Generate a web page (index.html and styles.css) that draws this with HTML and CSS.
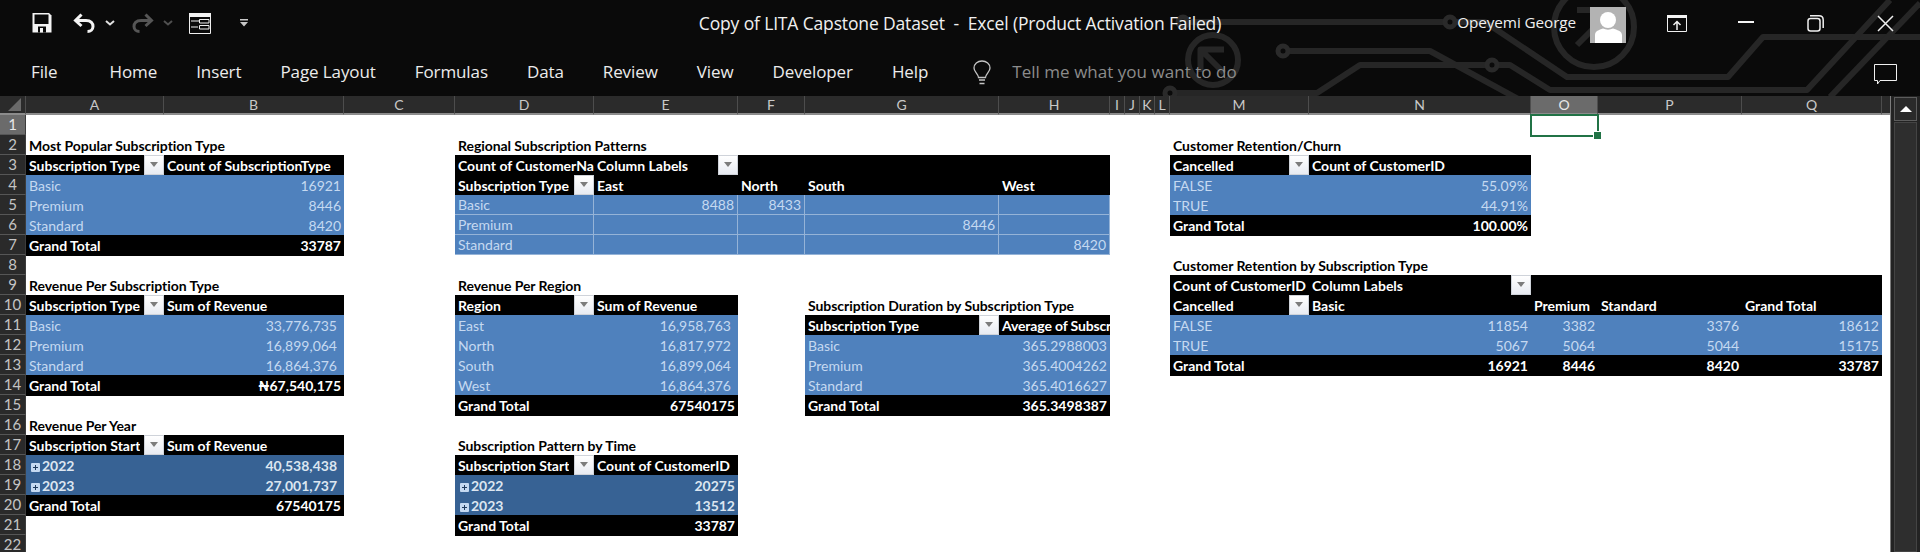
FILE: index.html
```html
<!DOCTYPE html>
<html lang="en">
<head>
<meta charset="utf-8">
<title>Copy of LITA Capstone Dataset - Excel</title>
<link rel="stylesheet" href="styles.css">
</head>
<body>
<header class="ribbon">
  <svg class="circuit" viewBox="0 0 1920 96" width="1920" height="96" aria-hidden="true">
    <g class="trace">
      <path d="M1183 22H1485L1567 77H1728L1763 37H1920"/>
      <path d="M1283 51H1430L1520 100"/>
      <path d="M1170 93H1317L1360 65H1510L1550 90H1807L1890 0"/>
      <path d="M1830 97L1920 3"/>
      <circle cx="1213" cy="60" r="25"/>
      <path d="M1224 49.500H1200.500V72M1202 51L1224 73"/>
      <circle cx="1594" cy="27" r="40"/>
      <path d="M1577 10H1612V40M1610 12L1577 45"/>
    </g>
    <g class="node">
      <circle cx="1183" cy="22" r="5"/>
      <circle cx="1450" cy="22" r="5"/>
      <circle cx="1283" cy="51" r="5"/>
      <circle cx="1492" cy="65" r="5"/>
      <circle cx="1170" cy="93" r="5"/>
    </g>
  </svg>

  <div class="titlebar">
    <div class="qat">
      <svg class="ic-save" width="20" height="20" viewBox="0 0 20 20"><path class="f-w" d="M1 0H17L19.500 2.500V19.500H.500V.500Z"/><path class="f-k" d="M2.500 1.500H16.500V11H2.500Z"/><path class="f-k" d="M6 13.500H14V19.500H6Z"/><path class="f-w" d="M8 15H11V19.500H8Z"/></svg>
      <svg class="ic-undo" width="22" height="20" viewBox="0 0 22 20"><path class="s-w" d="M8.500 1.500L2.500 7.500L8.500 13M2.500 7.500H13C18 7.500 20 10.500 20 13.500C20 16.500 17.500 18.500 14.500 18.500"/></svg>
      <svg class="ic-chev" width="10" height="6" viewBox="0 0 10 6"><path class="s-c" d="M1 1L5 4.500L9 1"/></svg>
      <svg class="ic-redo" width="22" height="20" viewBox="0 0 22 20"><path class="s-g" d="M13.500 1.500L19.500 7.500L13.500 13M19.500 7.500H9C4 7.500 2 10.500 2 13.500C2 16.500 4.500 18.500 7.500 18.500"/></svg>
      <svg class="ic-chev2" width="10" height="6" viewBox="0 0 10 6"><path class="s-cg" d="M1 1L5 4.500L9 1"/></svg>
      <svg class="ic-form" width="22" height="21" viewBox="0 0 22 21"><path class="s-t" d="M.500 .500H21.500V20.500H.500Z"/><path class="f-w" d="M0 0H22V4H0Z"/><path class="s-t" d="M2 8H10L11 6.500M10.500 6.500H20V10H10.500ZM2 14H9M10.500 12.500H20V16H10.500Z"/></svg>
      <svg class="ic-more" width="10" height="8" viewBox="0 0 10 8"><path class="f-l" d="M1 0H9V1.500H1ZM1 3H9L5 7.500Z"/></svg>
    </div>
    <div class="doc-title">Copy of LITA Capstone Dataset&nbsp; -&nbsp; Excel (Product Activation Failed)</div>
    <div class="account">
      <span class="user">Opeyemi George</span>
      <svg class="avatar" width="36" height="36" viewBox="0 0 36 36"><path class="f-a" d="M0 0H36V36H0Z"/><circle class="f-wh" cx="18" cy="13" r="8"/><path class="f-wh" d="M5 36V28C5 24 9 23 13 21.500C16 23 20 23 23 21.500C27 23 32 24 32 28V36Z"/></svg>
      <svg class="ic-display" width="20" height="17" viewBox="0 0 20 17"><path class="s-t" d="M.500 .500H19.500V16.500H.500Z"/><path class="f-w" d="M0 0H20V3H0Z"/><path class="s-t2" d="M10 15V7M6.500 10L10 6.500L13.500 10"/></svg>
      <svg class="ic-min" width="16" height="2" viewBox="0 0 16 2"><path class="f-w" d="M0 0H16V2H0Z"/></svg>
      <svg class="ic-restore" width="17" height="17" viewBox="0 0 17 17"><path class="s-t2" d="M3 .800H12Q16.200 .800 16.200 5V13M1 6Q1 3.500 3.500 3.500H10.500Q13 3.500 13 6V13.500Q13 16 10.500 16H3.500Q1 16 1 13.500Z"/></svg>
      <svg class="ic-close" width="17" height="17" viewBox="0 0 17 17"><path class="s-t2" d="M1 1L16 16M16 1L1 16"/></svg>
    </div>
  </div>

  <nav class="tabs">
    <span class="tab tab-file">File</span>
    <span class="tab">Home</span>
    <span class="tab">Insert</span>
    <span class="tab">Page Layout</span>
    <span class="tab">Formulas</span>
    <span class="tab">Data</span>
    <span class="tab">Review</span>
    <span class="tab">View</span>
    <span class="tab">Developer</span>
    <span class="tab">Help</span>
    <svg class="ic-bulb" width="18" height="25" viewBox="0 0 18 25"><path class="s-b" d="M5.500 17.500C5 13.500 1 12 1 8C1 4 4.500 1 9 1C13.500 1 17 4 17 8C17 12 13 13.500 12.500 17.500ZM6 20H12M6.500 23.500H11.500"/></svg>
    <span class="tell">Tell me what you want to do</span>
    <svg class="ic-comment" width="23" height="21" viewBox="0 0 23 21"><path class="s-t" d="M.500 .500H22.500V16.500H6L3.500 20V16.500H.500Z"/></svg>
  </nav>
</header>

<main class="workbook">
  <table class="sheet">
    <colgroup><col><col><col><col><col><col><col><col><col><col><col><col><col><col><col><col><col><col><col></colgroup>
    <thead>
      <tr class="colhead">
        <th class="corner"><svg width="13" height="13" viewBox="0 0 13 13"><path class="f-corner" d="M13 0V13H0Z"/></svg></th>
        <th>A</th><th>B</th><th>C</th><th>D</th><th>E</th><th>F</th><th>G</th><th>H</th><th>I</th><th>J</th><th>K</th><th>L</th><th>M</th><th>N</th><th class="on">O</th><th>P</th><th>Q</th><th class="end"></th>
      </tr>
    </thead>
    <tbody>
      <tr><th class="rh on">1</th><td colspan="14"></td><td class="cur"><span class="selbox"></span></td><td colspan="3"></td></tr>

      <tr><th class="rh">2</th><td class="title" colspan="3">Most Popular Subscription Type</td><td class="title" colspan="9">Regional Subscription Patterns</td><td class="title" colspan="6">Customer Retention/Churn</td></tr>

      <tr><th class="rh">3</th><td class="hd"><div class="hf"><span>Subscription Type</span><i class="filter"></i></div></td><td class="hd">Count of SubscriptionType</td><td></td><td class="hd">Count of CustomerNa</td><td class="hd"><div class="hf"><span>Column Labels</span><i class="filter"></i></div></td><td class="hd"></td><td class="hd"></td><td class="hd"></td><td colspan="4"></td><td class="hd"><div class="hf"><span>Cancelled</span><i class="filter"></i></div></td><td class="hd">Count of CustomerID</td><td colspan="4"></td></tr>

      <tr><th class="rh">4</th><td class="d">Basic</td><td class="d num">16921</td><td></td><td class="hd"><div class="hf"><span>Subscription Type</span><i class="filter"></i></div></td><td class="hd">East</td><td class="hd">North</td><td class="hd">South</td><td class="hd">West</td><td colspan="4"></td><td class="d">FALSE</td><td class="d num">55.09%</td><td colspan="4"></td></tr>

      <tr><th class="rh">5</th><td class="d">Premium</td><td class="d num">8446</td><td></td><td class="d g">Basic</td><td class="d g num">8488</td><td class="d g num">8433</td><td class="d g"></td><td class="d g"></td><td colspan="4"></td><td class="d">TRUE</td><td class="d num">44.91%</td><td colspan="4"></td></tr>

      <tr><th class="rh">6</th><td class="d">Standard</td><td class="d num">8420</td><td></td><td class="d g">Premium</td><td class="d g"></td><td class="d g"></td><td class="d g num">8446</td><td class="d g"></td><td colspan="4"></td><td class="gt">Grand Total</td><td class="gt num">100.00%</td><td colspan="4"></td></tr>

      <tr><th class="rh">7</th><td class="gt">Grand Total</td><td class="gt num">33787</td><td></td><td class="d g">Standard</td><td class="d g"></td><td class="d g"></td><td class="d g"></td><td class="d g num">8420</td><td colspan="10"></td></tr>

      <tr><th class="rh">8</th><td colspan="12"></td><td class="title" colspan="6">Customer Retention by Subscription Type</td></tr>

      <tr><th class="rh">9</th><td class="title" colspan="3">Revenue Per Subscription Type</td><td class="title" colspan="9">Revenue Per Region</td><td class="hd">Count of CustomerID</td><td class="hd"><div class="hf"><span>Column Labels</span><i class="filter"></i></div></td><td class="hd"></td><td class="hd"></td><td class="hd"></td><td></td></tr>

      <tr><th class="rh">10</th><td class="hd"><div class="hf"><span>Subscription Type</span><i class="filter"></i></div></td><td class="hd">Sum of Revenue</td><td></td><td class="hd"><div class="hf"><span>Region</span><i class="filter"></i></div></td><td class="hd">Sum of Revenue</td><td></td><td class="title" colspan="6">Subscription Duration by Subscription Type</td><td class="hd"><div class="hf"><span>Cancelled</span><i class="filter"></i></div></td><td class="hd">Basic</td><td class="hd">Premium</td><td class="hd">Standard</td><td class="hd">Grand Total</td><td></td></tr>

      <tr><th class="rh">11</th><td class="d">Basic</td><td class="d num acct">33,776,735</td><td></td><td class="d">East</td><td class="d num acct">16,958,763</td><td></td><td class="hd"><div class="hf"><span>Subscription Type</span><i class="filter"></i></div></td><td class="hd tight">Average of Subscr</td><td colspan="4"></td><td class="d">FALSE</td><td class="d num">11854</td><td class="d num">3382</td><td class="d num">3376</td><td class="d num">18612</td><td></td></tr>

      <tr><th class="rh">12</th><td class="d">Premium</td><td class="d num acct">16,899,064</td><td></td><td class="d">North</td><td class="d num acct">16,817,972</td><td></td><td class="d">Basic</td><td class="d num">365.2988003</td><td colspan="4"></td><td class="d">TRUE</td><td class="d num">5067</td><td class="d num">5064</td><td class="d num">5044</td><td class="d num">15175</td><td></td></tr>

      <tr><th class="rh">13</th><td class="d">Standard</td><td class="d num acct">16,864,376</td><td></td><td class="d">South</td><td class="d num acct">16,899,064</td><td></td><td class="d">Premium</td><td class="d num">365.4004262</td><td colspan="4"></td><td class="gt">Grand Total</td><td class="gt num">16921</td><td class="gt num">8446</td><td class="gt num">8420</td><td class="gt num">33787</td><td></td></tr>

      <tr><th class="rh">14</th><td class="gt">Grand Total</td><td class="gt num">₦67,540,175</td><td></td><td class="d">West</td><td class="d num acct">16,864,376</td><td></td><td class="d">Standard</td><td class="d num">365.4016627</td><td colspan="10"></td></tr>

      <tr><th class="rh">15</th><td colspan="3"></td><td class="gt">Grand Total</td><td class="gt num">67540175</td><td></td><td class="gt">Grand Total</td><td class="gt num">365.3498387</td><td colspan="10"></td></tr>

      <tr><th class="rh">16</th><td class="title" colspan="3">Revenue Per Year</td><td colspan="15"></td></tr>

      <tr><th class="rh">17</th><td class="hd"><div class="hf"><span>Subscription Start</span><i class="filter"></i></div></td><td class="hd">Sum of Revenue</td><td></td><td class="title" colspan="15">Subscription Pattern by Time</td></tr>

      <tr><th class="rh">18</th><td class="yr"><i class="plus"></i>2022</td><td class="yr num acct">40,538,438</td><td></td><td class="hd"><div class="hf"><span>Subscription Start</span><i class="filter"></i></div></td><td class="hd">Count of CustomerID</td><td colspan="13"></td></tr>

      <tr><th class="rh">19</th><td class="yr"><i class="plus"></i>2023</td><td class="yr num acct">27,001,737</td><td></td><td class="yr"><i class="plus"></i>2022</td><td class="yr num">20275</td><td colspan="13"></td></tr>

      <tr><th class="rh">20</th><td class="gt">Grand Total</td><td class="gt num">67540175</td><td></td><td class="yr"><i class="plus"></i>2023</td><td class="yr num">13512</td><td colspan="13"></td></tr>

      <tr><th class="rh">21</th><td colspan="3"></td><td class="gt">Grand Total</td><td class="gt num">33787</td><td colspan="13"></td></tr>

      <tr><th class="rh">22</th><td colspan="18"></td></tr>
    </tbody>
  </table>
  <aside class="vscroll">
    <div class="sb-up"><i></i></div>
    <div class="sb-thumb"></div>
  </aside>
</main>
</body>
</html>
```

FILE: styles.css
```css
* { box-sizing: border-box; }
html, body { margin: 0; height: 552px; overflow: hidden; }
body { width: 1920px; display: flex; flex-direction: column; background: #fff; font-family: "Lato", "Liberation Sans", sans-serif; }

/* ribbon */
.ribbon { position: relative; height: 96px; flex: none; background: #0a0a0a; color: #fff; font-family: "Open Sans", "Noto Sans", sans-serif; overflow: hidden; }
.circuit { position: absolute; left: 0; top: 0; }
.trace { fill: none; stroke: #262626; stroke-width: 6; stroke-linejoin: round; }
.node { fill: #0a0a0a; stroke: #2a2a2a; stroke-width: 5; }

.titlebar { position: relative; height: 48px; display: grid; grid-template-columns: 1fr auto 1fr; align-items: center; }
.qat { display: flex; align-items: center; padding: 0 0 2px 32px; }
.qat svg { display: block; flex: none; }
.ic-save { margin-right: 21px; }
.ic-undo { margin-right: 10px; }
.ic-chev { margin-right: 17px; }
.ic-redo { margin-right: 9px; }
.ic-chev2 { margin-right: 16px; }
.ic-form { margin-right: 28px; }
.doc-title { font-size: 17.500px; color: #f0f0f0; padding-bottom: 3px; white-space: nowrap; letter-spacing: -.15px; }
.account { display: flex; align-items: center; justify-content: flex-end; }
.account svg { display: block; flex: none; }
.user { font-size: 15.300px; color: #f0f0f0; margin-right: 14px; padding-bottom: 4px; letter-spacing: -.1px; }
.avatar { margin: 0 41px 0 0; position: relative; top: 1px; }
.ic-display { margin-right: 51px; position: relative; top: -1px; }
.ic-min { margin-right: 53px; position: relative; top: -2px; }
.ic-restore { margin-right: 53px; position: relative; top: -1px; }
.ic-close { margin-right: 26px; position: relative; top: -1px; }

.tabs { position: relative; height: 48px; display: flex; align-items: center; padding: 0 0 0 31px; font-size: 17px; color: #ececec; }
.tab { margin-right: 39px; white-space: nowrap; letter-spacing: -.1px; padding-bottom: 1px; }
.tab-file { margin-right: 52px; }
.ic-bulb { flex: none; margin: 0 21px 0 6px; }
.tell { color: #8c8c8c; white-space: nowrap; letter-spacing: .03px; padding-bottom: 1px; }
.ic-comment { position: absolute; left: 1874px; top: 16px; }

/* icon paints */
.f-w { fill: #f4f4f4; }
.f-k { fill: #0a0a0a; }
.f-l { fill: #c8c8c8; }
.f-a { fill: #b3b3b3; }
.f-wh { fill: #fff; }
.f-corner { fill: #6a6a6a; }
.s-w, .s-g, .s-c, .s-cg, .s-t, .s-t2, .s-b { fill: none; }
.s-w { stroke: #f4f4f4; stroke-width: 3; }
.s-g { stroke: #565656; stroke-width: 3; }
.s-c { stroke: #e0e0e0; stroke-width: 2; }
.s-cg { stroke: #505050; stroke-width: 2; }
.s-t { stroke: #f0f0f0; stroke-width: 1; }
.s-t2 { stroke: #f0f0f0; stroke-width: 1.500; }
.s-b { stroke: #c4c4c4; stroke-width: 1.300; }

/* sheet */
.workbook { flex: 1; min-height: 0; display: flex; overflow: hidden; }
.sheet { width: 1890px; flex: none; table-layout: fixed; border-collapse: separate; border-spacing: 0; font-size: 14px; align-self: flex-start; }
col:nth-child(1) { width: 26px; }
col:nth-child(2) { width: 138px; }
col:nth-child(3) { width: 180px; }
col:nth-child(4) { width: 111px; }
col:nth-child(5) { width: 139px; }
col:nth-child(6) { width: 144px; }
col:nth-child(7) { width: 67px; }
col:nth-child(8) { width: 194px; }
col:nth-child(9) { width: 111px; }
col:nth-child(10), col:nth-child(11), col:nth-child(12), col:nth-child(13) { width: 15px; }
col:nth-child(14) { width: 139px; }
col:nth-child(15) { width: 222px; }
col:nth-child(16) { width: 67px; }
col:nth-child(17) { width: 144px; }
col:nth-child(18) { width: 140px; }
col:nth-child(19) { width: 8px; }

.colhead th { height: 19px; padding: 0; background: #2b2b2b; color: #c8c8c8; font-weight: 400; line-height: 17px; text-align: center; border-right: 1px solid #4d4d4d; border-bottom: 2px solid #8c8c8c; }
.colhead th.on { background: #6b6b6b; color: #e8e8e8; }
.colhead th.end { border-right: 0; }
.colhead .corner { text-align: right; padding-right: 4px; vertical-align: bottom; }
.corner svg { display: block; margin: 0 0 2px auto; }

tbody tr { height: 20px; }
td, .rh { height: 20px; padding: 0; line-height: 19px; white-space: nowrap; overflow: hidden; }
td { padding: 0 3px; color: #000; }
.rh { background: #2a2a2a; color: #c4c4c4; font-weight: 400; text-align: center; font-size: 15px; border-bottom: 1px solid #565656; border-right: 1px solid #3c3c3c; }
.rh.on { background: #6b6b6b; color: #e8e8e8; }

.title { font-weight: 700; overflow: visible; letter-spacing: -.06px; }
.hd { background: #000; color: #fff; font-weight: 700; padding: 0 3px; }
td:has(> .hf) { padding: 0; }
.hf { display: flex; align-items: center; justify-content: space-between; height: 20px; }
.hf span { padding-left: 3px; overflow: hidden; }
.filter { flex: none; width: 20px; height: 20px; display: flex; align-items: center; justify-content: center; background: linear-gradient(#fff, #e8ebf2); border: 1px solid #cfd3da; }
.filter::after { content: ""; border: 4px solid transparent; border-top: 5px solid #7c7c7c; border-bottom: 0; margin-top: -2px; }
.tight { letter-spacing: -.15px; }

.d { background: #4f81bd; color: #c5d9f1; }
.g { border-right: 1px solid #95b3d7; border-bottom: 1px solid #95b3d7; }
.yr { background: #376294; color: #dce6f1; font-weight: 700; }
.gt { background: #000; color: #fff; font-weight: 700; box-shadow: 0 1px 0 #000; }
.num { text-align: right; }
.acct { padding-right: 7px; }
.plus { display: inline-block; width: 9px; height: 9px; margin: 0 2px 0 2px; vertical-align: -1px; border-radius: 1px; background: linear-gradient(#1f3a5c 0 0) center / 5px 1px no-repeat, linear-gradient(#1f3a5c 0 0) center / 1px 5px no-repeat, #c5d9f1; }

.cur { position: relative; overflow: visible; }
.selbox { position: absolute; left: -1px; top: -1px; right: -1px; bottom: -2px; border: 2px solid #217346; }
.selbox::after { content: ""; position: absolute; right: -5px; bottom: -5px; width: 7px; height: 7px; background: #217346; border: 1px solid #fff; }

/* scrollbar */
.vscroll { width: 30px; flex: none; margin-top: 0; padding: 1px 3px 0; background: #232323; border-left: 1px solid #7c7c7c; display: flex; flex-direction: column; gap: 1px; }
.sb-up { height: 24px; flex: none; background: #2a2a2a; border: 1px solid #5c5c5c; display: flex; align-items: center; justify-content: center; }
.sb-up i { border: 6px solid transparent; border-bottom: 6px solid #fff; border-top: 0; }
.sb-thumb { flex: 1; background: #2e2e2e; border: 1px solid #444; }
```
